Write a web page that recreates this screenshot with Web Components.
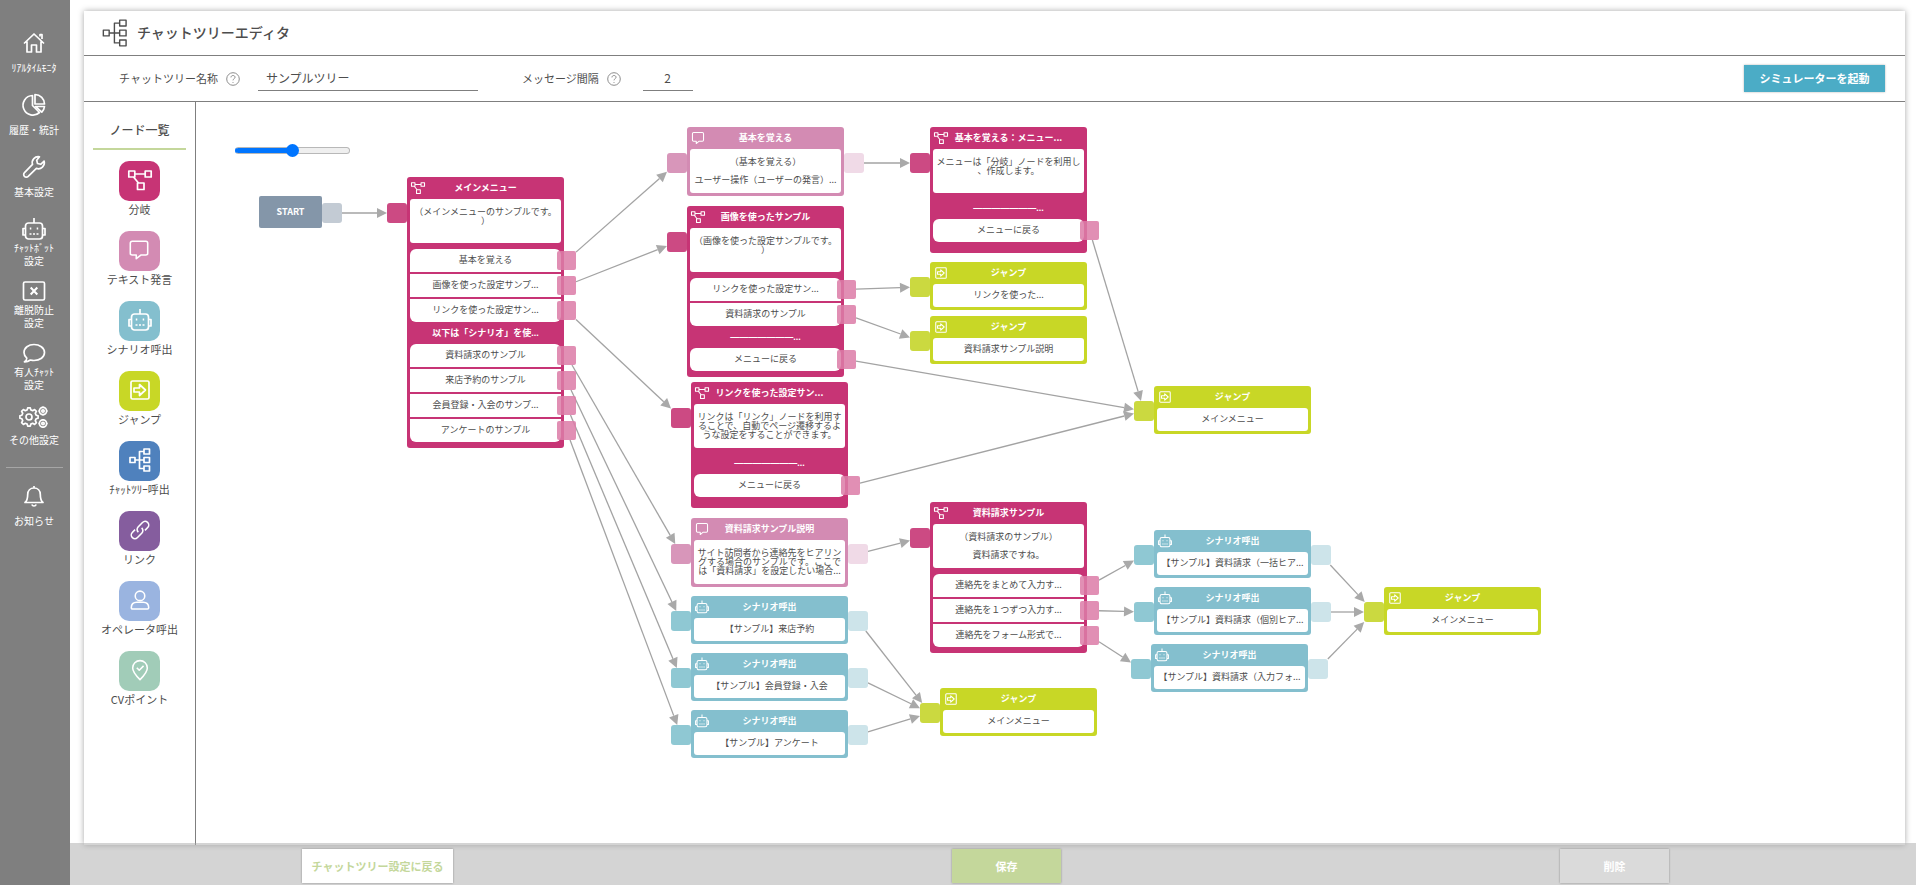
<!DOCTYPE html>
<html lang="ja">
<head>
<meta charset="utf-8">
<title>チャットツリーエディタ</title>
<style>
  body { margin: 0; background: #fff; color: #4d4d4d; font-family: "Noto Sans CJK JP", "Noto Sans", sans-serif; }
</style>
</head>
<body>
<tree-app>
  <side-nav slot="nav">
    <nav-item icon="home">ﾘｱﾙﾀｲﾑﾓﾆﾀ</nav-item>
    <nav-item icon="pie">履歴・統計</nav-item>
    <nav-item icon="wrench">基本設定</nav-item>
    <nav-item icon="robot">ﾁｬｯﾄﾎﾞｯﾄ<br>設定</nav-item>
    <nav-item icon="leave">離脱防止<br>設定</nav-item>
    <nav-item icon="bubble">有人ﾁｬｯﾄ<br>設定</nav-item>
    <nav-item icon="gears">その他設定</nav-item>
    <nav-item icon="bell" slot="after">お知らせ</nav-item>
  </side-nav>
  <editor-header slot="header">チャットツリーエディタ</editor-header>
  <editor-toolbar slot="toolbar"></editor-toolbar>
  <node-palette slot="palette">
    <palette-item icon="branch" style="--c:#c73475">分岐</palette-item>
    <palette-item icon="speech" style="--c:#d38bb3">テキスト発言</palette-item>
    <palette-item icon="robot" style="--c:#84bfce">シナリオ呼出</palette-item>
    <palette-item icon="jump" style="--c:#c8d726">ジャンプ</palette-item>
    <palette-item icon="tree" style="--c:#4f81bd">ﾁｬｯﾄﾂﾘｰ呼出</palette-item>
    <palette-item icon="link" style="--c:#855d9e">リンク</palette-item>
    <palette-item icon="person" style="--c:#9ab4e0">オペレータ呼出</palette-item>
    <palette-item icon="pin" style="--c:#a1ccb8">CVポイント</palette-item>
  </node-palette>
  <flow-canvas slot="canvas">
    <flow-start id="start" style="--x:63px;--y:94px">START</flow-start>

    <flow-node id="main" kind="branch" heading="メインメニュー" style="--x:211px;--y:75px">（メインメニューのサンプルです。
）<flow-option slot="rows" edge="top" to="basic">基本を覚える</flow-option><flow-option slot="rows" to="image">画像を使った設定サンプ...</flow-option><flow-option slot="rows" edge="bottom" to="linkset">リンクを使った設定サン...</flow-option><flow-caption slot="rows">以下は「シナリオ」を使...</flow-caption><flow-option slot="rows" edge="top" to="material-text">資料請求のサンプル</flow-option><flow-option slot="rows" to="visit">来店予約のサンプル</flow-option><flow-option slot="rows" to="member">会員登録・入会のサンプ...</flow-option><flow-option slot="rows" edge="bottom" to="survey">アンケートのサンプル</flow-option></flow-node>

    <flow-node id="basic" kind="text" heading="基本を覚える" to="basic-menu" style="--x:491px;--y:25px">（基本を覚える）

ユーザー操作（ユーザーの発言）...</flow-node>

    <flow-node id="image" kind="branch" heading="画像を使ったサンプル" style="--x:491px;--y:104px">（画像を使った設定サンプルです。
）<flow-option slot="rows" edge="top" to="jump-link">リンクを使った設定サン...</flow-option><flow-option slot="rows" edge="bottom" to="jump-material">資料請求のサンプル</flow-option><flow-caption slot="rows">———————...</flow-caption><flow-option slot="rows" edge="top bottom" to="jump-main">メニューに戻る</flow-option></flow-node>

    <flow-node id="linkset" kind="branch" heading="リンクを使った設定サン..." style="--x:495px;--y:280px">リンクは「リンク」ノードを利用す
ることで、自動でページ遷移するよ
うな設定をすることができます。<flow-caption slot="rows">———————...</flow-caption><flow-option slot="rows" edge="top bottom" to="jump-main">メニューに戻る</flow-option></flow-node>

    <flow-node id="material-text" kind="text" heading="資料請求サンプル説明" to="material" style="--x:495px;--y:416px">サイト訪問者から連絡先をヒアリン
グする場合のサンプルです。ここで
は「資料請求」を設定したい場合...</flow-node>

    <flow-node id="visit" kind="scenario" heading="シナリオ呼出" to="jump-low" style="--x:495px;--y:494px">【サンプル】来店予約</flow-node>
    <flow-node id="member" kind="scenario" heading="シナリオ呼出" to="jump-low" style="--x:495px;--y:551px">【サンプル】会員登録・入会</flow-node>
    <flow-node id="survey" kind="scenario" heading="シナリオ呼出" to="jump-low" style="--x:495px;--y:608px">【サンプル】アンケート</flow-node>

    <flow-node id="basic-menu" kind="branch" heading="基本を覚える：メニュー..." style="--x:734px;--y:25px">メニューは「分岐」ノードを利用し
、作成します。<flow-caption slot="rows">———————...</flow-caption><flow-option slot="rows" edge="top bottom" to="jump-main">メニューに戻る</flow-option></flow-node>

    <flow-node id="jump-link" kind="jump" heading="ジャンプ" style="--x:734px;--y:160px">リンクを使った...</flow-node>
    <flow-node id="jump-material" kind="jump" heading="ジャンプ" style="--x:734px;--y:214px">資料請求サンプル説明</flow-node>

    <flow-node id="material" kind="branch" heading="資料請求サンプル" style="--x:734px;--y:400px">（資料請求のサンプル）

資料請求ですね。<flow-option slot="rows" edge="top" to="bulk">連絡先をまとめて入力す...</flow-option><flow-option slot="rows" to="single">連絡先を１つずつ入力す...</flow-option><flow-option slot="rows" edge="bottom" to="form">連絡先をフォーム形式で...</flow-option></flow-node>

    <flow-node id="jump-low" kind="jump" heading="ジャンプ" style="--x:744px;--y:586px">メインメニュー</flow-node>
    <flow-node id="jump-main" kind="jump" heading="ジャンプ" style="--x:958px;--y:284px">メインメニュー</flow-node>
    <flow-node id="bulk" kind="scenario" heading="シナリオ呼出" to="jump-far" style="--x:958px;--y:428px">【サンプル】資料請求（一括ヒア...</flow-node>
    <flow-node id="single" kind="scenario" heading="シナリオ呼出" to="jump-far" style="--x:958px;--y:485px">【サンプル】資料請求（個別ヒア...</flow-node>
    <flow-node id="form" kind="scenario" heading="シナリオ呼出" to="jump-far" style="--x:955px;--y:542px">【サンプル】資料請求（入力フォ...</flow-node>
    <flow-node id="jump-far" kind="jump" heading="ジャンプ" style="--x:1188px;--y:485px">メインメニュー</flow-node>
  </flow-canvas>
  <action-bar slot="actions"></action-bar>
</tree-app>

<script>
const ICONS = {
  home: '<path d="M2 12.500 12 3l10 9.500M18 5.500V3.500h2v4.500M5 10.500V21h4.500v-7h5v7H19V10.500"/>',
  pie: '<path d="M10.500 2.500a9.800 9.800 0 1 0 7 17l-7-7z"/><path d="M13 1.500V11h9.500A9.500 9.500 0 0 0 13 1.500z"/><path d="M13.500 13.500h9a9 9 0 0 1-2.700 5.600z"/>',
  wrench: '<path d="M17.500 1.800a6 6 0 0 0-7 7.600l-8 8.200a2.600 2.600 0 0 0 3.700 3.800l8.200-8a6 6 0 0 0 7.700-7.300l-3.400 3.200-3.200-.8-.8-3.200z"/><path d="M4.300 19.500h.2"/>',
  robot: '<rect x="3.500" y="6" width="17" height="16" rx="3"/><path d="M12 1v5M3.500 11.500H1V18h2.500M20.500 11.500H23V18h-2.500"/><path d="M7.800 11.500h1.500M14.700 11.500h1.500" stroke-width="2"/><path d="M7.500 17h9" stroke-dasharray="2 1.500"/>',
  leave: '<rect x="1.500" y="3" width="21" height="18" rx="1.500"/><path d="m8.700 8.500 6.600 7M15.300 8.500l-6.600 7" stroke-width="2"/>',
  bubble: '<path d="M2.500 20.800c1.500-1 2.200-2.400 2.300-3.600A7.700 7.700 0 0 1 2 11.500C2 6.800 6.500 3.500 12 3.500s10.500 3.300 10.500 8-4.500 8-10.500 8c-1.300 0-2.500-.2-3.600-.5-1.700 1.200-3.700 1.900-5.900 1.800z"/>',
  speech: '<path d="M4.500 2.500h15a2 2 0 0 1 2 2v11a2 2 0 0 1-2 2h-5.500l-5 4v-4H4.500a2 2 0 0 1-2-2v-11a2 2 0 0 1 2-2z"/>',
  gears: '<path d="m7.200 3.700.5-2h2.600l.5 2 1.900.8 1.900-1.100 1.800 1.800-1.100 1.900.8 1.900 2 .5v2.600l-2 .5-.8 1.900 1.100 1.900-1.800 1.800-1.900-1.100-1.900.8-.5 2H7.700l-.5-2-1.900-.8-1.900 1.100-1.800-1.800 1.100-1.900-.8-1.900-2-.5V9.500l2-.5.8-1.900-1.100-1.900 1.800-1.800 1.900 1.100z" transform="translate(0 1.200)"/><circle cx="9" cy="12" r="3"/><circle cx="23" cy="6" r="3.600"/><circle cx="23" cy="6" r="1.200"/><circle cx="23" cy="18.500" r="3.600"/><circle cx="23" cy="18.500" r="1.200"/><path d="M23 1.400v1M27.600 6h-1M23 10.600v-1M18.400 6h1M23 13.900v1M27.600 18.500h-1M23 23.100v-1M18.400 18.500h1"/>',
  bell: '<path d="M12 2v2M3 18.500c2.500-2 2.700-4.500 2.700-8C5.700 6.800 8.300 4 12 4s6.300 2.800 6.300 6.500c0 3.500.2 6 2.700 8z"/><path d="M9.800 20.500c.4 1 1.200 1.500 2.200 1.500s1.800-.5 2.200-1.500"/>',
  branch: '<rect x="0.800" y="3" width="6" height="6"/><rect x="17.200" y="3" width="6" height="6"/><rect x="9.500" y="15" width="6.500" height="6.500"/><path d="M6.800 6h10.400M5.500 9l5 6"/>',
  jump: '<rect x="3" y="3" width="18" height="18" rx="1.500"/><path d="M6 10h5.500V6.500l6 5.500-6 5.500V14H6z"/>',
  tree: '<rect x="2" y="9.500" width="5" height="5"/><rect x="16" y="1" width="5.500" height="5"/><rect x="16" y="9.500" width="5.500" height="5"/><rect x="16" y="18" width="5.500" height="5"/><path d="M7 12h9M16 3.500h-4.500v17H16"/>',
  link: '<path d="m10.200 14.300c-1.700-1.500-1.800-3.900-.3-5.500l4.800-5c1.600-1.600 4-1.600 5.600-.1s1.600 4 .1 5.600l-3 3.100"/><path d="M13.800 9.700c1.700 1.500 1.800 3.900.3 5.500l-4.800 5c-1.600 1.600-4 1.600-5.600.1s-1.600-4-.1-5.600l3-3.100"/>',
  person: '<circle cx="12" cy="7.500" r="5.200"/><path d="M2.500 20.500c0-4 2.800-6 6-6h7c3.200 0 6 2 6 6 0 .8-.5 1.300-1.300 1.300H3.800c-.8 0-1.300-.5-1.300-1.300z"/>',
  pin: '<path d="M12 22.500C8 18.500 4 14.500 4 9.800a8 8 0 0 1 16 0c0 4.700-4 8.700-8 12.700z"/><path d="m8.500 9.500 2.700 2.700 4.700-4.700"/>',
  help: '<circle cx="12" cy="12" r="10.800"/><path d="M8.500 9.300c0-2 1.500-3.300 3.500-3.300s3.500 1.200 3.500 3c0 2.500-3.500 2.600-3.500 5.300"/><path d="M12 17v1.500" stroke-width="2"/>'
};
const WIDE = { gears: '0 0 28 24' };

function define(name, html, setup) {
  const tpl = document.createElement('template');
  tpl.innerHTML = html;
  customElements.define(name, class extends HTMLElement {
    constructor() {
      super();
      this.attachShadow({ mode: 'open' }).append(tpl.content.cloneNode(true));
    }
    connectedCallback() { if (setup) setup(this, this.shadowRoot); }
  });
}

define('tree-icon', `<style>
  :host { display: block; width: var(--w, 24px); height: var(--w, 24px); }
  svg { display: block; width: 100%; height: 100%; overflow: visible; fill: none; stroke: currentColor; stroke-width: var(--sw, 1.7); stroke-linejoin: round; }
</style><svg viewBox="0 0 24 24" aria-hidden="true"></svg>`, (el, root) => {
  const name = el.getAttribute('name');
  const svg = root.querySelector('svg');
  svg.setAttribute('viewBox', WIDE[name] || '0 0 24 24');
  svg.innerHTML = ICONS[name] || '';
});

define('tree-app', `<style>
  :host { display: flex; min-height: 100vh; }
  .nav { flex: none; display: flex; }
  .page { flex: 1; min-width: 0; display: flex; flex-direction: column; }
  .panel { flex: 1; display: flex; flex-direction: column; margin: 11px 11px 0 14px; background: #fff; box-shadow: 0 0 6px rgba(0,0,0,.35); }
  .work { flex: 1; display: flex; }
  ::slotted([slot=canvas]) { flex: 1; min-width: 0; }
</style>
<div class="nav"><slot name="nav"></slot></div>
<div class="page">
  <main class="panel">
    <slot name="header"></slot>
    <slot name="toolbar"></slot>
    <div class="work"><slot name="palette"></slot><slot name="canvas"></slot></div>
  </main>
  <slot name="actions"></slot>
</div>`);

define('side-nav', `<style>
  :host { display: block; width: 70px; background: #7f7f7f; color: #fff; }
  nav { padding-top: 31px; }
  hr { margin: 2px 7px 16px 6px; border: 0; height: 1px; background: #a6a6a6; }
</style><nav><slot></slot><hr><slot name="after"></slot></nav>`);

define('nav-item', `<style>
  :host { display: block; height: 62px; padding-right: 2px; }
  a { display: flex; flex-direction: column; align-items: center; color: inherit; text-decoration: none; font-size: 10px; line-height: 13px; text-align: center; white-space: nowrap; }
  i { display: grid; place-items: center; height: 24px; }
  tree-icon[name=gears] { --w: 28px; }
  span { display: grid; align-items: center; height: 24px; }
  p { margin: 0; }
</style><a href="#"><i></i><span><p><slot></slot></p></span></a>`, (el, root) => {
  root.querySelector('i').innerHTML = `<tree-icon name="${el.getAttribute('icon')}"></tree-icon>`;
});

define('editor-header', `<style>
  :host { display: flex; align-items: center; gap: 8px; height: 44px; padding-left: 17px; border-bottom: 1px solid #7f7f7f; }
  h1 { margin: 0; padding-bottom: 2px; font-size: 14px; line-height: 20px; font-weight: 500; }
  tree-icon { --w: 28px; --sw: 1.2; }
</style><tree-icon name="tree"></tree-icon><h1><slot></slot></h1>`);

define('editor-toolbar', `<style>
  :host { display: flex; align-items: center; height: 45px; padding: 0 20px 0 35px; border-bottom: 1px solid #7f7f7f; font-size: 11px; }
  label { padding-bottom: 2px; line-height: 16px; }
  tree-icon { --w: 14px; color: #8c8c8c; margin: 0 18px 0 8px; }
  input { box-sizing: border-box; height: 24px; padding: 0 8px 2px; border: 0; border-bottom: 1px solid #7f7f7f; background: none; font: inherit; font-size: 12px; color: inherit; outline: none; }
  #name { width: 220px; margin-right: 44px; }
  #gap { width: 50px; margin-left: 4px; text-align: center; }
  button { margin-left: auto; width: 141px; height: 27px; padding: 0; border: 0; background: #4bacc6; color: #fff; font: bold 11px/27px "Noto Sans CJK JP", sans-serif; box-shadow: 0 0 2px rgba(0,0,0,.3); }
</style>
<label for="name">チャットツリー名称</label><tree-icon name="help"></tree-icon><input id="name" type="text" value="サンプルツリー">
<label for="gap">メッセージ間隔</label><tree-icon name="help"></tree-icon><input id="gap" type="text" inputmode="numeric" value="2">
<button type="button">シミュレーターを起動</button>`);

define('node-palette', `<style>
  :host { display: block; box-sizing: border-box; width: 112px; border-right: 1px solid #7f7f7f; }
  h2 { margin: 18px 9px 11px; padding-bottom: 8px; border-bottom: 2px solid #c4d79b; font-size: 12px; line-height: 20px; font-weight: 500; text-align: center; }
  div { display: grid; gap: 14px; justify-items: center; }
</style><h2>ノード一覧</h2><div><slot></slot></div>`);

define('palette-item', `<style>
  :host { display: block; }
  button { display: flex; flex-direction: column; align-items: center; padding: 0; border: 0; background: none; color: inherit; font: inherit; font-size: 11px; line-height: 16px; white-space: nowrap; cursor: grab; }
  i { display: grid; place-items: center; width: 41px; height: 40px; padding-bottom: 2px; box-sizing: border-box; border-radius: 10px; background: var(--c); color: #fff; }
  tree-icon[name=speech], tree-icon[name=link], tree-icon[name=person], tree-icon[name=pin] { --w: 22px; }
</style><button type="button"><i></i><slot></slot></button>`, (el, root) => {
  root.querySelector('i').innerHTML = `<tree-icon name="${el.getAttribute('icon')}"></tree-icon>`;
});

const PORT = `.port { position: absolute; width: 20px; height: 20px; border-radius: 3px; }`;

define('flow-start', `<style>
  :host { position: absolute; left: var(--x); top: var(--y); width: 63px; height: 32px; border-radius: 2px; background: #8496a9; color: #fff; font-size: 9px; line-height: 32px; font-weight: 700; text-align: center; }
  ${PORT}
  .port { left: 63px; top: 7px; background: #c3cbd4; }
</style><slot></slot><span class="port"></span>`, (el, root) => {
  el.outs = [[root.querySelector('.port'), 'main']];
});

const KINDS = {
  branch: ['#c73475', '#cc4a83', '', 'branch'],
  text: ['#d38bb3', '#d896ba', '#f0dae7', 'speech'],
  scenario: ['#84bfce', '#8fc8d3', '#cde4ea', 'robot'],
  jump: ['#c8d726', '#cbd940', '', 'jump']
};

define('flow-node', `<style>
  :host { position: absolute; left: var(--x); top: var(--y); width: 157px; box-sizing: border-box; padding: 0 3px 3px; border-radius: 3px; background: var(--c); font-size: 9px; }
  :host([kind=branch]) { min-height: 126px; padding-bottom: 6px; }
  header { position: relative; height: 22px; line-height: 21px; font-weight: 700; color: #fff; text-align: center; white-space: nowrap; }
  tree-icon { position: absolute; left: 1px; top: 4px; --w: 14px; --sw: 1.8; }
  .body { box-sizing: border-box; height: 44px; padding-top: 8px; line-height: 9px; border-radius: 3px; background: #fff; text-align: center; white-space: pre; }
  .short { height: 23px; padding-top: 0; line-height: 22px; }
  .rows { display: grid; gap: 2px; margin-top: 6px; }
  ${PORT}
  .in { left: -20px; top: 26px; background: var(--in); }
  .out { left: 157px; top: 26px; background: var(--out); }
  .low { top: 15px; }
</style><header></header><div class="body"><slot></slot></div>`, (el, root) => {
  const kind = el.getAttribute('kind');
  const [c, inC, outC, icon] = KINDS[kind];
  el.style.setProperty('--c', c);
  el.style.setProperty('--in', inC);
  el.style.setProperty('--out', outC);
  const short = kind === 'scenario' || kind === 'jump';
  root.querySelector('header').innerHTML = `<tree-icon name="${icon}"></tree-icon><span>${el.getAttribute('heading')}</span>`;
  root.querySelector('.body').classList.toggle('short', short);
  const add = (cls) => {
    const s = document.createElement('span');
    s.className = 'port ' + cls + (short ? ' low' : '');
    root.append(s);
    return s;
  };
  el.inPort = add('in');
  el.outs = [];
  if (outC) el.outs.push([add('out'), el.getAttribute('to')]);
  if (kind === 'branch') {
    const d = document.createElement('div');
    d.className = 'rows';
    d.innerHTML = '<slot name="rows"></slot>';
    root.append(d);
  }
});

define('flow-option', `<style>
  :host { display: block; position: relative; height: 23px; line-height: 22px; background: #fff; color: #4d4d4d; text-align: center; white-space: nowrap; }
  :host([edge~=top]) { border-top-left-radius: 6px; border-top-right-radius: 6px; }
  :host([edge~=bottom]) { border-bottom-left-radius: 6px; border-bottom-right-radius: 6px; }
  .port { position: absolute; right: -15px; top: 2px; width: 19px; height: 19px; border-radius: 2px; background: rgba(220,125,168,.86); }
</style><slot></slot><span class="port"></span>`);

define('flow-caption', `<style>
  :host { display: block; height: 18px; line-height: 18px; color: #fff; font-family: "Liberation Sans", "Noto Sans CJK JP", sans-serif; font-weight: 700; text-align: center; white-space: nowrap; }
</style><slot></slot>`);

define('flow-canvas', `<style>
  :host { display: block; position: relative; overflow: hidden; }
  svg { position: absolute; inset: 0; width: 100%; height: 100%; }
  label { position: absolute; left: 39px; top: 40px; display: flex; }
  input { appearance: none; width: 115px; height: 16px; margin: 0; background: none; }
  input::-webkit-slider-runnable-track { height: 7px; box-sizing: border-box; border-radius: 4px; border: 1px solid #b8b8b8; border-left-color: #0075ff; background: linear-gradient(90deg, #0075ff 50%, #efefef 50%) border-box; }
  input::-webkit-slider-thumb { appearance: none; width: 13px; height: 13px; margin-top: -4px; border-radius: 50%; background: #0075ff; }
</style>
<svg aria-hidden="true"><g></g></svg>
<label><input type="range" min="0" max="100" value="50" aria-label="表示倍率"></label>
<slot></slot>`, (el, root) => {
  const g = root.querySelector('g');
  const box = (n) => {
    const r = n.getBoundingClientRect(), o = el.getBoundingClientRect();
    return { x: r.left - o.left + r.width / 2, y: r.top - o.top + r.height / 2, w: r.width / 2, h: r.height / 2 };
  };
  // Each edge runs centre to centre and is clipped at the border of both ports.
  const draw = () => {
    let out = '';
    const edges = [];
    for (const n of el.children) {
      edges.push(...(n.outs || []));
      for (const o of n.querySelectorAll('flow-option')) edges.push([o.shadowRoot.querySelector('.port'), o.getAttribute('to')]);
    }
    for (const [from, to] of edges) {
      const target = el.querySelector('#' + to);
      const a = box(from), b = box(target.inPort);
      const dx = b.x - a.x, dy = b.y - a.y, len = Math.hypot(dx, dy);
      const cut = (r) => Math.min(r.w / Math.abs(dx || 1e-6), r.h / Math.abs(dy || 1e-6));
      const ta = cut(a), tb = 1 - cut(b);
      const ux = dx / len, uy = dy / len;
      const x1 = a.x + dx * ta, y1 = a.y + dy * ta, x2 = a.x + dx * tb, y2 = a.y + dy * tb;
      const bx = x2 - ux * 10, by = y2 - uy * 10;
      out += `<path fill="none" stroke="#a3a3a3" stroke-width="1.3" d="M${x1} ${y1}L${bx} ${by}"/>`
        + `<path fill="#a9a9a9" d="M${x2} ${y2}L${bx - uy * 5} ${by + ux * 5}L${bx + uy * 5} ${by - ux * 5}z"/>`;
    }
    g.innerHTML = out;
  };
  draw();
  addEventListener('resize', draw);
});

define('action-bar', `<style>
  :host { display: flex; justify-content: space-between; align-items: center; position: relative; box-sizing: border-box; height: 42px; margin-top: -2px; padding: 3px 247px 0 232px; background: rgba(169,169,169,.5); }
  button { width: 109px; height: 34px; padding: 0; border: 0; color: #fff; font: bold 11px/34px "Noto Sans CJK JP", sans-serif; box-shadow: 0 0 2px rgba(0,0,0,.35); }
  .back { width: 151px; background: #fff; color: #c4d79b; }
  .save { background: #c4d79b; }
  .del { background: #dadada; }
</style>
<button class="back" type="button">チャットツリー設定に戻る</button>
<button class="save" type="button">保存</button>
<button class="del" type="button">削除</button>`);
</script>
</body>
</html>
